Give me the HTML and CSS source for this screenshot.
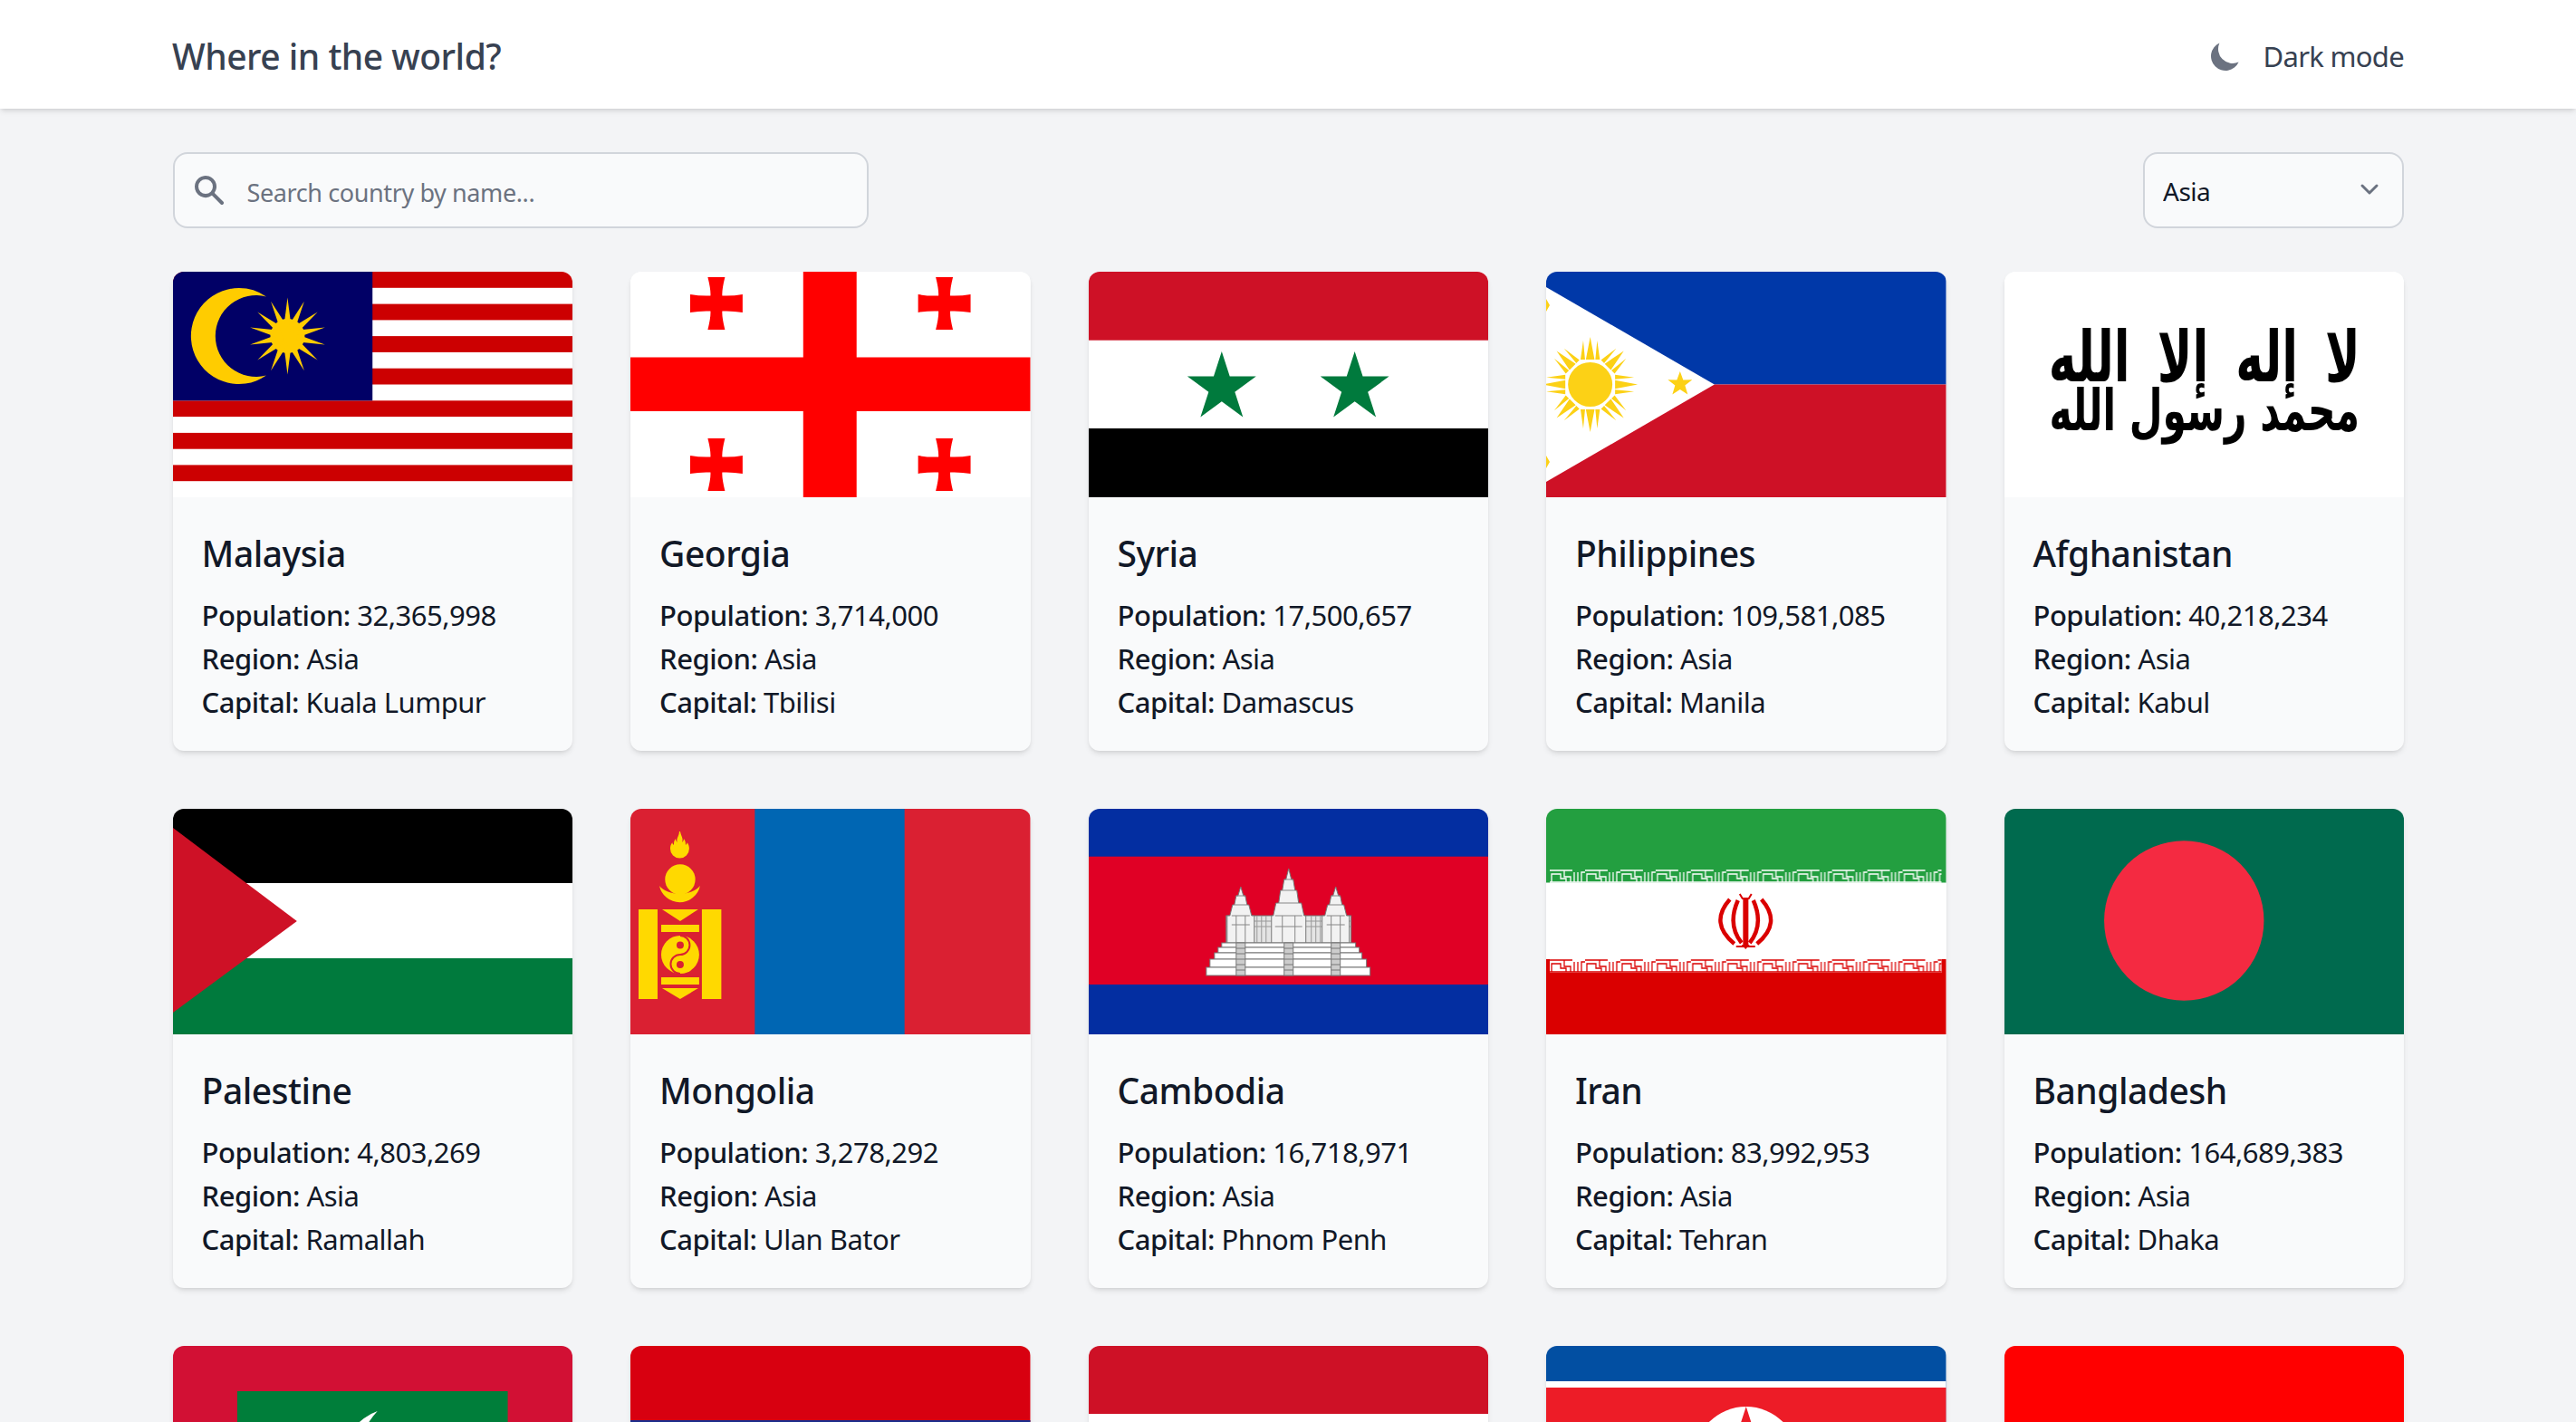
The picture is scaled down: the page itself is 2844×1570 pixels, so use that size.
FILE: index.html
```html
<!DOCTYPE html>
<html lang="en">
<head>
<meta charset="utf-8">
<title>Where in the world?</title>
<link rel="stylesheet" href="styles.css">
</head>
<body>
<header class="topbar">
  <h1 class="brand">Where in the world?</h1>
  <button class="theme-toggle" type="button">
    <svg class="icon-40 icon-gray" viewBox="0 0 20 20"><path d="M17.293 13.293A8 8 0 016.707 2.707a8.001 8.001 0 1010.586 10.586z"/></svg>
    <span>Dark mode</span>
  </button>
</header>
<main class="page">
  <div class="filters">
    <label class="search">
      <svg class="icon-40 icon-gray search-icon" viewBox="0 0 20 20"><path fill-rule="evenodd" clip-rule="evenodd" d="M8 4a4 4 0 100 8 4 4 0 000-8zM2 8a6 6 0 1110.89 3.476l4.817 4.817a1 1 0 01-1.414 1.414l-4.816-4.816A6 6 0 012 8z"/></svg>
      <input class="search-input" type="text" placeholder="Search country by name...">
    </label>
    <div class="region">
      <select class="region-select"><option>Asia</option></select>
      <svg class="icon-40 region-arrow" viewBox="0 0 20 20"><path d="M6 8l4 4 4-4"/></svg>
    </div>
  </div>
  <section class="grid">

    <article class="card">
      <svg class="flag" viewBox="0 0 442 249" preserveAspectRatio="none">
        <rect width="442" height="249" fill="#fff"/>
        <g fill="#cc0001">
          <rect y="0" width="442" height="17.800"/><rect y="35.600" width="442" height="17.800"/><rect y="71.100" width="442" height="17.800"/><rect y="106.700" width="442" height="17.800"/><rect y="142.300" width="442" height="17.800"/><rect y="177.900" width="442" height="17.800"/><rect y="213.400" width="442" height="17.800"/>
        </g>
        <rect width="220.500" height="142.300" fill="#010066"/>
        <path fill="#fc0" fill-rule="evenodd" d="M73 18a53 53 0 1 0 30 96.600a45 45 0 1 1 0-87.200A53 53 0 0 0 73 18z"/>
        <g fill="#fc0">
          <circle cx="126.600" cy="71" r="19"/>
          <g id="my-ray"><path d="M126.600 28.500L132 71l-5.400 42.500L121.200 71z"/></g>
          <use href="#my-ray" transform="rotate(25.700 126.600 71)"/>
          <use href="#my-ray" transform="rotate(51.400 126.600 71)"/>
          <use href="#my-ray" transform="rotate(77.100 126.600 71)"/>
          <use href="#my-ray" transform="rotate(102.900 126.600 71)"/>
          <use href="#my-ray" transform="rotate(128.600 126.600 71)"/>
          <use href="#my-ray" transform="rotate(154.300 126.600 71)"/>
        </g>
      </svg>
      <div class="card-body">
        <h2 class="name">Malaysia</h2>
        <p class="fact"><b>Population:</b> 32,365,998</p>
        <p class="fact"><b>Region:</b> Asia</p>
        <p class="fact"><b>Capital:</b> Kuala Lumpur</p>
      </div>
    </article>

    <article class="card">
      <svg class="flag" viewBox="0 0 442 249" preserveAspectRatio="none">
        <rect width="442" height="249" fill="#fff"/>
        <g fill="#f00">
          <rect x="191" width="59" height="249"/><rect y="94.500" width="442" height="59.500"/>
          <path id="ge-cross" transform="translate(95 35)" d="M-9.500-29H9.500Q6-15 6.500-8.500Q18-8 29-10V10Q18 8 6.500 8.500Q6 15 9.500 29H-9.500Q-6 15-6.500 8.500Q-18 8-29 10V-10Q-18-8-6.500-8.500Q-6-15-9.500-29Z"/>
          <use href="#ge-cross" x="252"/>
          <use href="#ge-cross" y="178"/>
          <use href="#ge-cross" x="252" y="178"/>
        </g>
      </svg>
      <div class="card-body">
        <h2 class="name">Georgia</h2>
        <p class="fact"><b>Population:</b> 3,714,000</p>
        <p class="fact"><b>Region:</b> Asia</p>
        <p class="fact"><b>Capital:</b> Tbilisi</p>
      </div>
    </article>

    <article class="card">
      <svg class="flag" viewBox="0 0 442 249" preserveAspectRatio="none">
        <rect width="442" height="249" fill="#fff"/>
        <rect width="442" height="75.700" fill="#ce1126"/>
        <rect y="173" width="442" height="76" fill="#000"/>
        <polygon id="sy-star" fill="#007a3d" points="147,88 155.900,115.600 185,115.600 161.500,132.700 170.500,160.400 147,143.300 123.500,160.400 132.500,132.700 109,115.600 138.100,115.600"/>
        <use href="#sy-star" x="147"/>
      </svg>
      <div class="card-body">
        <h2 class="name">Syria</h2>
        <p class="fact"><b>Population:</b> 17,500,657</p>
        <p class="fact"><b>Region:</b> Asia</p>
        <p class="fact"><b>Capital:</b> Damascus</p>
      </div>
    </article>

    <article class="card">
      <svg class="flag" viewBox="0 0 442 249" preserveAspectRatio="none">
        <rect width="442" height="124.500" fill="#0038a8"/>
        <rect y="124.500" width="442" height="124.500" fill="#ce1126"/>
        <path fill="#fff" d="M0 17L186 124.500 0 232z"/>
        <g fill="#fcd116">
          <circle cx="48.700" cy="124.500" r="24.500"/>
          <g id="ph-ray">
            <path d="M48.700 72L53.500 97H43.900zM48.700 177L53.500 152H43.900z"/>
            <path d="M41 76L43 97H38zM41 173L43 152H38z"/>
            <path d="M56.400 76L59.400 97H54.400zM56.400 173L59.400 152H54.400z"/>
          </g>
          <use href="#ph-ray" transform="rotate(45 48.700 124.500)"/>
          <use href="#ph-ray" transform="rotate(90 48.700 124.500)"/>
          <use href="#ph-ray" transform="rotate(135 48.700 124.500)"/>
          <path d="M148 110l3.500 9.500 10-.3-8 6.300 3 10-8.500-5.600-8.500 5.600 3-10-8-6.300 10 .3z"/>
          <path d="M0 30l4 7-4 7zM0 203l4 7-4 7z"/>
        </g>
      </svg>
      <div class="card-body">
        <h2 class="name">Philippines</h2>
        <p class="fact"><b>Population:</b> 109,581,085</p>
        <p class="fact"><b>Region:</b> Asia</p>
        <p class="fact"><b>Capital:</b> Manila</p>
      </div>
    </article>

    <article class="card">
      <svg class="flag" viewBox="0 0 442 249" preserveAspectRatio="none">
        <rect width="442" height="249" fill="#fff"/>
        <text class="shahada" transform="scale(1 1.500)" text-anchor="middle" direction="rtl"><tspan class="shahada-top" x="221" y="81">لا إله إلا الله</tspan><tspan class="shahada-bottom" x="221" y="117">محمد رسول الله</tspan></text>
      </svg>
      <div class="card-body">
        <h2 class="name">Afghanistan</h2>
        <p class="fact"><b>Population:</b> 40,218,234</p>
        <p class="fact"><b>Region:</b> Asia</p>
        <p class="fact"><b>Capital:</b> Kabul</p>
      </div>
    </article>

    <article class="card">
      <svg class="flag" viewBox="0 0 442 249" preserveAspectRatio="none">
        <rect width="442" height="82" fill="#000"/>
        <rect y="82" width="442" height="83" fill="#fff"/>
        <rect y="165" width="442" height="84" fill="#007a3d"/>
        <path fill="#ce1126" d="M0 21L137 124 0 225z"/>
      </svg>
      <div class="card-body">
        <h2 class="name">Palestine</h2>
        <p class="fact"><b>Population:</b> 4,803,269</p>
        <p class="fact"><b>Region:</b> Asia</p>
        <p class="fact"><b>Capital:</b> Ramallah</p>
      </div>
    </article>

    <article class="card">
      <svg class="flag" viewBox="0 0 442 249" preserveAspectRatio="none">
        <rect width="442" height="249" fill="#da2032"/>
        <rect x="137.500" width="165.500" height="249" fill="#0066b3"/>
        <g fill="#ffd900">
          <path d="M55 25c1 5 4 8 2 12 2-2 2-3 2-4 2 2 2 5 2 7 1-1 2-2 1.500-3 2 2 2.500 5 2.500 7a10.500 10.500 0 0 1-21 0c0-2 .5-5 2.500-7-.5 1 .5 2 1.500 3 0-2 0-5 2-7 0 1 0 2 2 4-2-4 2-7 2-12z"/>
          <circle cx="55" cy="78" r="16.700"/>
          <path d="M32 85a23 23 0 0 0 45 0a26 18 0 0 1-45 0z"/>
          <rect x="9" y="111" width="21" height="99"/>
          <rect x="79" y="111" width="21.500" height="99"/>
          <path d="M35 111H75L55 124zM35 198H75L55 210z"/>
          <rect x="34" y="128" width="42" height="8"/>
          <rect x="34" y="186" width="42" height="8"/>
          <circle cx="55" cy="161" r="21"/>
        </g>
        <path fill="none" stroke="#da2032" stroke-width="2" d="M55 140a10.500 10.500 0 0 1 0 21a10.500 10.500 0 0 0 0 21"/>
        <circle cx="55" cy="150.500" r="4" fill="#da2032"/>
        <circle cx="55" cy="172" r="4" fill="#da2032"/>
      </svg>
      <div class="card-body">
        <h2 class="name">Mongolia</h2>
        <p class="fact"><b>Population:</b> 3,278,292</p>
        <p class="fact"><b>Region:</b> Asia</p>
        <p class="fact"><b>Capital:</b> Ulan Bator</p>
      </div>
    </article>

    <article class="card">
      <svg class="flag" viewBox="0 0 442 249" preserveAspectRatio="none">
        <rect width="442" height="249" fill="#032ea1"/>
        <rect y="52.700" width="442" height="141.300" fill="#e00025"/>
        <g fill="#fff" stroke="#777" stroke-width="1">
          <rect x="152" y="118" width="138" height="30" fill="#e4e4e4"/>
          <path fill="none" stroke="#999" d="M186 118v30M191 118v30M196 118v30M246 118v30M251 118v30M256 118v30M152 124h138M152 130h138"/>
          <path id="kh-side" fill="#f2f2f2" d="M168 86L171 96L173 96L175 106L177 106L180 118L183 118V148H153V118L156 118L159 106L161 106L163 96L165 96Z"/>
          <use href="#kh-side" x="105"/>
          <path fill="#f2f2f2" d="M221 66L224 78L226 78L228 90L230 90L232 104L235 104L238 118L240 118V148H202V118L204 118L207 104L210 104L212 90L214 90L216 78L218 78Z"/>
          <path fill="none" stroke="#888" d="M163 96h10M161 106h14M158 118h20M158 128h20M163 118v30M173 118v30M268 96h10M266 106h14M263 118h20M263 128h20M268 118v30M278 118v30M216 78h10M214 90h14M210 104h22M206 118h30M206 130h30M214 118v30M228 118v30"/>
          <rect x="147" y="148" width="148" height="5"/>
          <rect x="143" y="153" width="156" height="6"/>
          <rect x="139" y="159" width="163" height="7"/>
          <rect x="134" y="166" width="173" height="9"/>
          <rect x="130" y="175" width="181" height="9"/>
          <path fill="#ccc" d="M163 148h10v36h-10zM216 148h10v36h-10zM268 148h10v36h-10z"/>
          <path fill="none" d="M163 154h10M163 160h10M163 166h10M163 172h10M163 178h10M216 154h10M216 160h10M216 166h10M216 172h10M216 178h10M268 154h10M268 160h10M268 166h10M268 172h10M268 178h10"/>
        </g>
      </svg>
      <div class="card-body">
        <h2 class="name">Cambodia</h2>
        <p class="fact"><b>Population:</b> 16,718,971</p>
        <p class="fact"><b>Region:</b> Asia</p>
        <p class="fact"><b>Capital:</b> Phnom Penh</p>
      </div>
    </article>

    <article class="card">
      <svg class="flag" viewBox="0 0 442 249" preserveAspectRatio="none">
        <defs>
          <pattern id="ir-green" width="39" height="15" patternUnits="userSpaceOnUse" x="4" y="67">
            <path fill="none" stroke="#fff" stroke-width="1.300" d="M0 1H25M2 14V5H12V10H18V14M16 1V8H23V14M27 14V3M31 14V3M35 14V3H39M0 14H39"/>
          </pattern>
          <pattern id="ir-red" width="39" height="15" patternUnits="userSpaceOnUse" x="4" y="166">
            <path fill="none" stroke="#da0000" stroke-width="1.300" d="M0 1H25M2 14V5H12V10H18V14M16 1V8H23V14M27 14V3M31 14V3M35 14V3H39M0 14H39"/>
          </pattern>
        </defs>
        <rect width="442" height="81.700" fill="#239f40"/>
        <rect y="81.700" width="442" height="84.300" fill="#fff"/>
        <rect y="166" width="442" height="83" fill="#da0000"/>
        <rect x="4" y="67" width="433" height="15" fill="url(#ir-green)"/>
        <rect x="4" y="166" width="433" height="15" fill="#fff"/>
        <rect x="4" y="166" width="433" height="15" fill="url(#ir-red)"/>
        <g fill="none" stroke="#da0000">
          <path stroke-width="6" d="M220.600 98V152"/>
          <path stroke-width="4.500" d="M212 101Q200 128 216 148M229 101Q241 128 225 148"/>
          <path stroke-width="4.500" d="M203 100Q180 126 208 149M238 100Q261 126 233 149"/>
          <path stroke-width="2" d="M214 94l3 5h7l3-5M210 152H231"/>
        </g>
        <path fill="#da0000" d="M216 150h9l-4.500 5z"/>
      </svg>
      <div class="card-body">
        <h2 class="name">Iran</h2>
        <p class="fact"><b>Population:</b> 83,992,953</p>
        <p class="fact"><b>Region:</b> Asia</p>
        <p class="fact"><b>Capital:</b> Tehran</p>
      </div>
    </article>

    <article class="card">
      <svg class="flag" viewBox="0 0 442 249" preserveAspectRatio="none">
        <rect width="442" height="249" fill="#006a4e"/>
        <circle cx="198.500" cy="123.500" r="88.300" fill="#f42a41"/>
      </svg>
      <div class="card-body">
        <h2 class="name">Bangladesh</h2>
        <p class="fact"><b>Population:</b> 164,689,383</p>
        <p class="fact"><b>Region:</b> Asia</p>
        <p class="fact"><b>Capital:</b> Dhaka</p>
      </div>
    </article>

    <article class="card">
      <svg class="flag" viewBox="0 0 442 249" preserveAspectRatio="none">
        <rect width="442" height="249" fill="#d21034"/>
        <rect x="71" y="50" width="299" height="149" fill="#007e3a"/>
        <path fill="#fff" d="M226 72A55 55 0 0 0 226 176A75 75 0 0 1 226 72Z"/>
      </svg>
    </article>

    <article class="card">
      <svg class="flag" viewBox="0 0 442 249" preserveAspectRatio="none">
        <rect width="442" height="249" fill="#d80010"/>
        <rect y="82" width="442" height="85" fill="#1b2d8c"/>
        <circle cx="221" cy="124.500" r="34" fill="#fff"/>
      </svg>
    </article>

    <article class="card">
      <svg class="flag" viewBox="0 0 442 249" preserveAspectRatio="none">
        <rect width="442" height="249" fill="#fff"/>
        <rect width="442" height="75" fill="#ce1126"/>
      </svg>
    </article>

    <article class="card">
      <svg class="flag" viewBox="0 0 442 249" preserveAspectRatio="none">
        <rect width="442" height="249" fill="#024fa2"/>
        <rect y="39" width="442" height="171" fill="#fff"/>
        <rect y="46" width="442" height="157" fill="#ed1c27"/>
        <circle cx="221" cy="124.500" r="57.500" fill="#fff"/>
        <path fill="#ed1c27" d="M221 67l13 40h42l-34 25 13 40-34-25-34 25 13-40-34-25h42z"/>
      </svg>
    </article>

    <article class="card">
      <svg class="flag" viewBox="0 0 442 249" preserveAspectRatio="none">
        <rect width="442" height="249" fill="#f00"/>
      </svg>
    </article>

  </section>
</main>
</body>
</html>
```
FILE: styles.css
```css
* { box-sizing: border-box; }
html, body { margin: 0; height: 100vh; overflow: hidden; }
body {
  background: #f3f4f6;
  color: #111827;
  font-family: "Noto Sans", "Open Sans", "Liberation Sans", sans-serif;
  font-size: 31px;
  line-height: 48px;
}
.topbar {
  display: flex;
  align-items: center;
  justify-content: space-between;
  height: 120px;
  padding: 3px 190px 0;
  background: #fff;
  box-shadow: 0 4px 6px -1px rgba(0,0,0,.1), 0 2px 4px -2px rgba(0,0,0,.1);
  position: relative;
}
.brand {
  margin: 0;
  font-size: 39px;
  line-height: 56px;
  font-weight: 500;
  color: #374151;
  letter-spacing: -0.5px;
}
.theme-toggle {
  display: flex;
  align-items: center;
  gap: 22px;
  padding: 0;
  border: 0;
  background: none;
  font: inherit;
  color: #374151;
  letter-spacing: -0.7px;
}
.icon-40 { display: block; width: 40px; height: 40px; flex: none; }
.icon-gray { fill: #6b7280; }
.page { padding: 48px 190px 0 190.6px; }
.filters {
  display: flex;
  justify-content: space-between;
  margin-bottom: 48px;
}
.search {
  display: flex;
  align-items: center;
  width: 768px;
  height: 84px;
  padding: 0 20px 0 18px;
  gap: 22px;
  background: #f9fafb;
  border: 2px solid #d1d5db;
  border-radius: 16px;
}
.search-input {
  flex: 1;
  min-width: 0;
  border: 0;
  padding: 5px 0 0;
  outline: 0;
  background: transparent;
  font: inherit;
  font-size: 27px;
  line-height: 40px;
  color: #111827;
  letter-spacing: -0.4px;
}
.search-input::placeholder { color: #6b7280; opacity: 1; }
.region { position: relative; width: 288px; height: 84px; }
.region-select {
  appearance: none;
  display: block;
  width: 100%;
  height: 100%;
  padding: 2px 60px 0 20px;
  background: #f9fafb;
  border: 2px solid #d1d5db;
  border-radius: 16px;
  font: inherit;
  font-size: 28px;
  color: #111827;
  letter-spacing: -0.5px;
}
.region-arrow {
  position: absolute;
  right: 18px;
  top: 21px;
  fill: none;
  stroke: #6b7280;
  stroke-width: 1.5;
  stroke-linecap: round;
  stroke-linejoin: round;
}
.grid {
  display: grid;
  grid-template-columns: repeat(5, 1fr);
  gap: 64px;
}
.card {
  background: #f9fafb;
  border-radius: 12px;
  overflow: hidden;
  box-shadow: 0 4px 6px -1px rgba(0,0,0,.1), 0 2px 4px -2px rgba(0,0,0,.1);
}
.flag { display: block; width: 100%; height: 249px; }
.card-body { padding: 34px 32px 30px; }
.name {
  margin: 0 0 16px;
  font-size: 39px;
  line-height: 56px;
  font-weight: 500;
  letter-spacing: -0.5px;
}
.fact { margin: 0; letter-spacing: -0.5px; }
.fact b { font-weight: 500; }
.shahada {
  font-family: "DejaVu Sans", sans-serif;
  font-weight: 700;
  fill: #000;
}
.shahada-top { font-size: 52px; word-spacing: 12px; }
.shahada-bottom { font-size: 42.5px; }
```
